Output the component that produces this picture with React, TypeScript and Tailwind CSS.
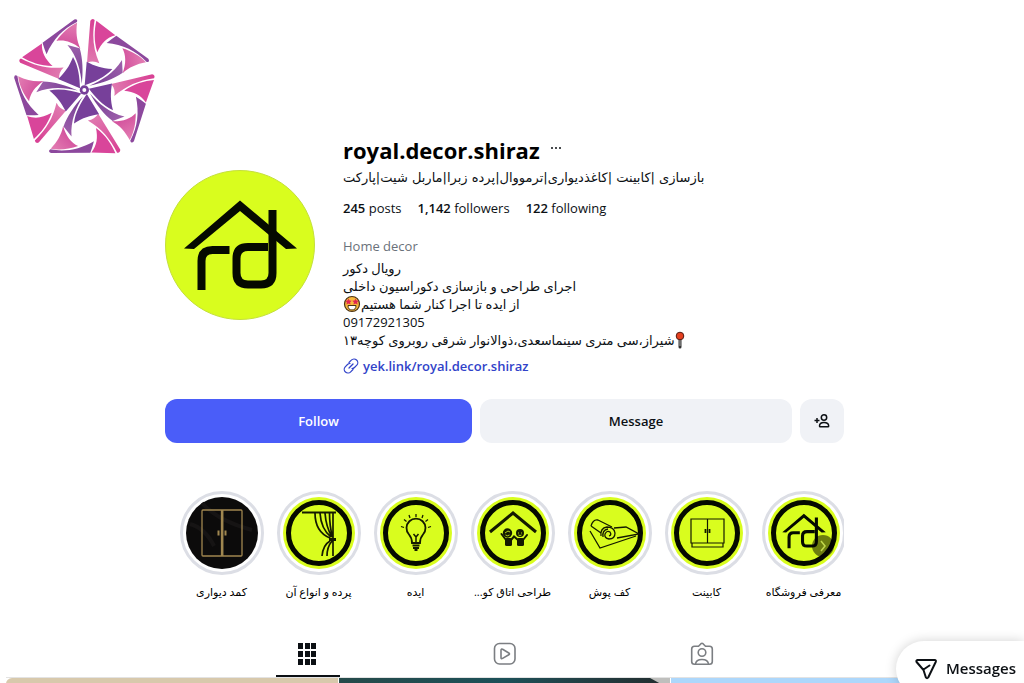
import type { ReactNode } from "react";

const LIME = "#d9fd1e";

const BrandLogo = () => (
  <svg viewBox="42 54 426 408" className="h-[136px] w-[142px]" role="img" aria-label="Logo">
    <defs>
      <linearGradient id="pinkEdge" x1="290" y1="60" x2="280" y2="190" gradientUnits="userSpaceOnUse">
        <stop offset="0" stopColor="#d83f93" />
        <stop offset="1" stopColor="#e07ab0" />
      </linearGradient>
      <linearGradient id="pinkFade" x1="430" y1="180" x2="365" y2="190" gradientUnits="userSpaceOnUse">
        <stop offset="0" stopColor="#e27ab1" />
        <stop offset="1" stopColor="#d24f9c" />
      </linearGradient>
      <linearGradient id="purpleFade" x1="366" y1="190" x2="262" y2="255" gradientUnits="userSpaceOnUse">
        <stop offset="0" stopColor="#9c5faa" />
        <stop offset="1" stopColor="#713a92" />
      </linearGradient>
    </defs>
    {[0, 72, 144, 216, 288].map((angle) => (
      <g key={angle} transform={`rotate(${angle} 253 270)`}>
        <path fill="url(#pinkEdge)" d="M271 62 Q277 53 284 60 C276 108 279 145 298 190 Q280 180 261 188Z" />
        <path fill="#d9459a" d="M289 62 L346 106 C320 113 304 130 292 157 C281 122 283 90 289 62Z" />
        <path fill="#8c489d" d="M349 107 L445 176 Q451 186 440 186 C408 152 368 134 320 129 Q334 117 349 107Z" />
        <path fill="url(#pinkFade)" d="M367 145 C394 153 421 168 438 187 C410 192 387 202 368 220 C379 190 378 165 367 145Z" />
        <path fill="url(#purpleFade)" d="M366 180 L368 218 C342 236 304 250 268 257 C304 242 341 220 366 180Z" />
        <path fill="#77409a" d="M260 185 C285 198 305 205 337 207 C315 232 282 246 254 256Z" />
      </g>
    ))}
    <circle cx="253" cy="270" r="14" fill="#77409a" />
    <circle cx="253" cy="270" r="6" fill="#fff" />
  </svg>
);

const HouseMark = () => (
  <g fill="none" stroke="#050a00" strokeWidth="8">
    <path d="M75 30.500 19 78.500 29 79 75 41l46 38 11-.5Z" fill="#050a00" stroke="none" />
    <path d="M36.500 120V91q0-11 11-11h17" />
    <path d="M103 77H83q-11.500 0-11.500 11.500v14.500q0 11.500 11.500 11.500h13q11.500 0 11.500-11.500V40" />
  </g>
);

const Avatar = () => (
  <svg viewBox="0 0 150 150" className="size-[150px] shrink-0" role="img" aria-label="royal.decor.shiraz profile picture">
    <circle cx="75" cy="75" r="74.5" fill={LIME} stroke="#c4df3c" />
    <HouseMark />
  </svg>
);

// Lime cover with the black ring shared by most highlights
const LimeCover = ({ children }: { children: ReactNode }) => (
  <svg viewBox="0 0 72 72" className="size-[72px]" aria-hidden="true">
    <circle cx="36" cy="36" r="36" fill={LIME} />
    <circle cx="36" cy="36" r="30.500" fill="none" stroke="#050a00" strokeWidth="5" />
    <g fill="none" stroke="#141a00" strokeWidth="1.2">
      {children}
    </g>
  </svg>
);

const WardrobeCover = () => (
  <svg viewBox="0 0 72 72" className="size-[72px]" aria-hidden="true">
    <circle cx="36" cy="36" r="36" fill="#0c0b0b" />
    <path d="M16 6q16 18 50 27M4 27q15 4 24 22" stroke="#161414" strokeWidth="4" fill="none" />
    <g fill="none" stroke="#a08750" strokeWidth="1.3">
      <rect x="16" y="13" width="40" height="46" rx="1" />
      <path d="M35.500 13v46M36.800 13v46" />
      <path d="M32.500 33.500v5M39.500 33.500v5" strokeWidth="2" />
    </g>
  </svg>
);

const highlights = [
  { label: "کمد دیواری", cover: <WardrobeCover /> },
  {
    label: "پرده و انواع آن",
    cover: (
      <LimeCover>
        <path d="M19 15.500h34" strokeWidth="2" />
        <path d="M32 16q0 19 15 25M37 16q1 16 11 24M42 16q1 14 7 24M46.500 16q0 13 3 24M50 16v43M47 44q-7 4-8 15M49 44q-5 6-5 15" strokeWidth="1.700" />
        <path d="M46 42.500h7" strokeWidth="3" />
      </LimeCover>
    ),
  },
  {
    label: "ایده",
    cover: (
      <LimeCover>
        <path d="M32 46q0-5-3-8.500a9.500 9.500 0 1 1 14 0Q40 41 40 46Z" strokeWidth="1.800" />
        <path d="M36 46v-7M36 40l-2.500-3M36 40l2.500-3" strokeWidth="1.500" />
        <path d="M32.500 48.500h7M33 51h6M34.500 53h3" strokeWidth="2" />
        <path d="M36 17v3M29 18l1 3M43 18l-1 3M24 22.500l2.500 2M48 22.500l-2.500 2M21 29.500l3 1M51 29.500l-3 1" strokeWidth="1.300" />
      </LimeCover>
    ),
  },
  {
    label: "طراحی اتاق کو...",
    cover: (
      <LimeCover>
        <path d="m13 35 23-19 23 19" strokeWidth="3" />
        <g fill="#141a00" stroke="none">
          <circle cx="30.500" cy="36" r="4.700" />
          <circle cx="43" cy="36" r="4" />
          <rect x="28" y="41" width="7" height="8" rx="1.500" />
          <rect x="40" y="41" width="7" height="8" rx="1.500" />
        </g>
        <path d="m24.500 37 4.500 6M34 43l3-3.500 4 3.500M46 43l4-5" strokeWidth="2" strokeLinecap="round" />
        <path d="m28 36 3-2 2 1M28.500 38q2 1.500 4 0M41 36h1M44 36h1M41.500 38q1.500 1 3 0" stroke={LIME} strokeWidth=".8" />
      </LimeCover>
    ),
  },
  {
    label: "کف پوش",
    cover: (
      <LimeCover>
        <path d="M17 29q2-7 7-6l14 7M17 29l10 7M40 31l12-1 13 7-22 4M16 34l10 17 36-12" strokeWidth="1.300" />
        <path d="M27 39q-1-8 6-9 7 0 8 6 0 6-6 6-5-1-4-5 2-4 5-2 2 3-1 4M29 40q-1-7 5-8" strokeWidth="1.300" />
      </LimeCover>
    ),
  },
  {
    label: "کابینت",
    cover: (
      <LimeCover>
        <path d="M20 22h33v24H20ZM36.500 22v24M21 46v4h31v-4" />
        <path d="M34.500 32v4M38.500 32v4" strokeWidth="1.800" />
      </LimeCover>
    ),
  },
  {
    label: "معرفی فروشگاه",
    cover: (
      <LimeCover>
        <g transform="translate(7 5) scale(.385)">
          <HouseMark />
        </g>
      </LimeCover>
    ),
  },
];

const StarEyes = () => (
  <svg viewBox="0 0 18 18" className="inline size-[18px] align-[-4px]" role="img" aria-label="Star-struck">
    <circle cx="9" cy="9" r="7.500" fill="#f8b83c" stroke="#4b3213" strokeWidth="1.200" />
    <path d="m5.500 3.500 1 2 2.200.2-1.600 1.600.5 2.200-2.100-1.100-2.100 1.100.4-2.200-1.600-1.600 2.300-.2ZM12.500 3.500l1 2 2.300.2-1.700 1.600.5 2.200-2.100-1.100-2.100 1.100.5-2.200-1.700-1.600 2.300-.2Z" fill="#e02452" />
    <path d="M5 10.500h8q0 4.500-4 4.500t-4-4.500Z" fill="#fff" stroke="#4b3213" />
  </svg>
);

const Pin = () => (
  <svg viewBox="0 0 10 18" className="inline h-[18px] w-[10px] align-[-4px]" role="img" aria-label="Location">
    <path d="M5 8v8" stroke="#333" strokeWidth="3" strokeLinecap="round" />
    <path d="M5 8v7" stroke="#aaa" />
    <circle cx="5" cy="5" r="3.800" fill="#e6401f" stroke="#521a12" />
  </svg>
);

const tabs = [
  {
    name: "Posts",
    icon: (
      <svg viewBox="0 0 24 24" className="size-6" fill="#0c1014">
        {[1, 9, 17].map((y) =>
          [2, 9, 15].map((x) => <rect key={`${x}-${y}`} x={x} y={y} width="5" height="6" />)
        )}
      </svg>
    ),
  },
  {
    name: "Reels",
    icon: (
      <svg viewBox="0 0 24 24" className="size-6" fill="none" stroke="currentColor" strokeWidth="1.600" strokeLinejoin="round">
        <rect x="1.500" y="1.500" width="20.500" height="20.500" rx="5" />
        <path d="M8 8.200v7.200q0 1.800 1.600 1l6.200-3.600q1.400-.9 0-1.800L9.600 7.300Q8 6.500 8 8.200Z" />
      </svg>
    ),
  },
  {
    name: "Tagged",
    icon: (
      <svg viewBox="0 0 24 24" className="size-6" fill="none" stroke="currentColor" strokeWidth="1.600" strokeLinejoin="round">
        <path d="M8.500 4.200 11 1.700q1-.9 2 0l2.500 2.500h4q2.800 0 2.800 2.800v12.500q0 2.700-2.800 2.700h-15q-2.800 0-2.800-2.700V7q0-2.800 2.800-2.800Z" />
        <circle cx="12" cy="10.500" r="3.800" />
        <path d="M5.500 22q.5-4.500 6.500-4.500t6.500 4.500" />
      </svg>
    ),
  },
];

const App = () => {
  return (
    <div className="h-screen overflow-hidden bg-white pr-[15px] font-['Open_Sans','DejaVu_Sans',sans-serif] text-sm text-[#0c1014]">
      <header className="pt-[18px] pl-3.5">
        <BrandLogo />
      </header>

      <main className="-mt-4">
        <div className="mx-auto max-w-[679px]">
          <section className="flex items-start gap-7">
            <div className="pt-8">
              <Avatar />
            </div>
            <div className="min-w-0 flex-1">
              <div className="flex h-6 items-center gap-2.5">
                <h1 className="text-[22px] leading-6 font-bold text-black">royal.decor.shiraz</h1>
                <button type="button" aria-label="Options" className="pb-1">
                  <svg viewBox="0 0 12 4" className="h-1 w-3" fill="#0c1014">
                    <circle cx="2" cy="2" r="1" />
                    <circle cx="6" cy="2" r="1" />
                    <circle cx="10" cy="2" r="1" />
                  </svg>
                </button>
              </div>
              <p dir="rtl" className="mt-[7px] text-left font-['DejaVu_Sans',sans-serif] text-[13px] leading-[18px] whitespace-nowrap">
                بازسازی |کابینت |کاغذدیواری|ترمووال|پرده زبرا|ماربل شیت|پارکت
              </p>
              <ul className="mt-3 flex gap-4 text-[13px] leading-[18px]">
                <li><b className="font-semibold">245</b> posts</li>
                <li><b className="font-semibold">1,142</b> followers</li>
                <li><b className="font-semibold">122</b> following</li>
              </ul>
              <div className="mt-5 text-[13px] leading-[18px]">
                <p className="mb-1 text-[#6a717a]">Home decor</p>
                <div dir="rtl" className="text-left whitespace-nowrap">
                  <p>رویال دکور</p>
                  <p>اجرای طراحی و بازسازی دکوراسیون داخلی</p>
                  <p>از ایده تا اجرا کنار شما هستیم<StarEyes /></p>
                  <p>09172921305</p>
                  <p><Pin />شیراز،سی متری سینماسعدی،ذوالانوار شرقی روبروی کوچه۱۳</p>
                </div>
                <a href="#link" className="mt-2 flex items-center gap-1 font-semibold text-[#3143c9]">
                  <svg viewBox="0 0 16 16" className="size-4" fill="none" stroke="currentColor" strokeWidth="1.200" strokeLinecap="round">
                    <path d="M6 4.500 8.300 2.200a3.500 3.500 0 0 1 5.500 5L11.500 9.500a3.500 3.500 0 0 1-2.500 1" />
                    <path d="M10 11.500 7.700 13.800a3.500 3.500 0 0 1-5.500-5L4.500 6.500a3.500 3.500 0 0 1 2.500-1" />
                    <path d="m6 10 4-4" />
                  </svg>
                  yek.link/royal.decor.shiraz
                </a>
              </div>
            </div>
          </section>

          <div className="mt-6 flex gap-2 text-[13px] font-semibold">
            <button type="button" className="h-11 flex-[307_1_0%] rounded-xl bg-[#4a5df9] text-white">Follow</button>
            <button type="button" className="h-11 flex-[312_1_0%] rounded-xl bg-[#f0f2f6]">Message</button>
            <button type="button" aria-label="Similar accounts" className="flex size-11 items-center justify-center rounded-xl bg-[#f0f2f6]">
              <svg viewBox="0 0 16 16" className="size-4" fill="none" stroke="currentColor" strokeWidth="1.500">
                <circle cx="10" cy="4.500" r="2.700" />
                <path d="M5.500 13q0-3.500 4.500-3.500t4.700 3.500q0 .8-.8.8H6.200q-.7 0-.7-.8ZM.5 7.500h5M3 5v5" />
              </svg>
            </button>
          </div>

          <section className="relative mt-12 overflow-hidden pl-2" aria-label="Highlights">
            <ul className="flex">
              {highlights.map((item) => (
                <li key={item.label} className="w-[97px] shrink-0">
                  <a href="#highlight" className="flex flex-col items-center gap-2">
                    <span className="flex size-[84px] items-center justify-center rounded-full border-[3px] border-[#dcdee5]">
                      {item.cover}
                    </span>
                    <span dir="rtl" className="text-[11px] leading-[18px] font-medium whitespace-nowrap text-black">{item.label}</span>
                  </a>
                </li>
              ))}
            </ul>
            <button type="button" aria-label="Next" className="absolute top-11 right-2.5 flex size-[22px] items-center justify-center rounded-full bg-black/50">
              <svg viewBox="0 0 12 12" className="size-3" fill="none" stroke="#c2d94c" strokeWidth="1.500">
                <path d="m4 1 4 5-4 5" />
              </svg>
            </button>
          </section>
        </div>

        <nav className="mx-auto mt-8 grid max-w-[591px] grid-cols-3 justify-items-center" aria-label="Profile tabs">
          {tabs.map((tab, i) => (
            <button
              key={tab.name}
              type="button"
              aria-label={tab.name}
              className={`flex h-11 w-16 items-center justify-center border-b-2 ${
                i === 0 ? "border-[#0c1014]" : "border-transparent text-[#7b7e82]"
              }`}
            >
              {tab.icon}
            </button>
          ))}
        </nav>

        <div className="mx-1.5 grid grid-cols-3 gap-px border-t border-[#e3e3e3]">
          <div className="h-96 rounded-tl-md bg-[#d8c9ac]" />
          <div className="flex h-96 justify-end bg-linear-to-r from-[#254a4a] via-[#1c5058] to-[#222c2e]">
            <svg viewBox="0 0 20 6" className="h-1.5 w-5" fill="#bfbfbd">
              <path d="M0 0h20v6h-9Z" />
            </svg>
          </div>
          <div className="h-96 bg-[#add7fb]" />
        </div>
      </main>

      <button
        type="button"
        className="fixed right-0 -bottom-3.5 flex h-14 items-center gap-2 rounded-l-full bg-white pr-2 pl-[18px] text-[15px] font-semibold shadow-[0_0_12px_rgba(0,0,0,0.18)]"
      >
        <svg viewBox="0 0 24 24" className="size-6" fill="none" stroke="currentColor" strokeWidth="2" strokeLinejoin="round" strokeLinecap="round">
          <path d="M3.500 3h17q2 .2 1.200 2l-7.500 15.500q-1.200 1.500-2.300 0L9.500 13 2.600 5Q1.800 3.300 3.500 3ZM9.500 12.500l6-4" />
        </svg>
        Messages
      </button>
    </div>
  );
};

export default App;
